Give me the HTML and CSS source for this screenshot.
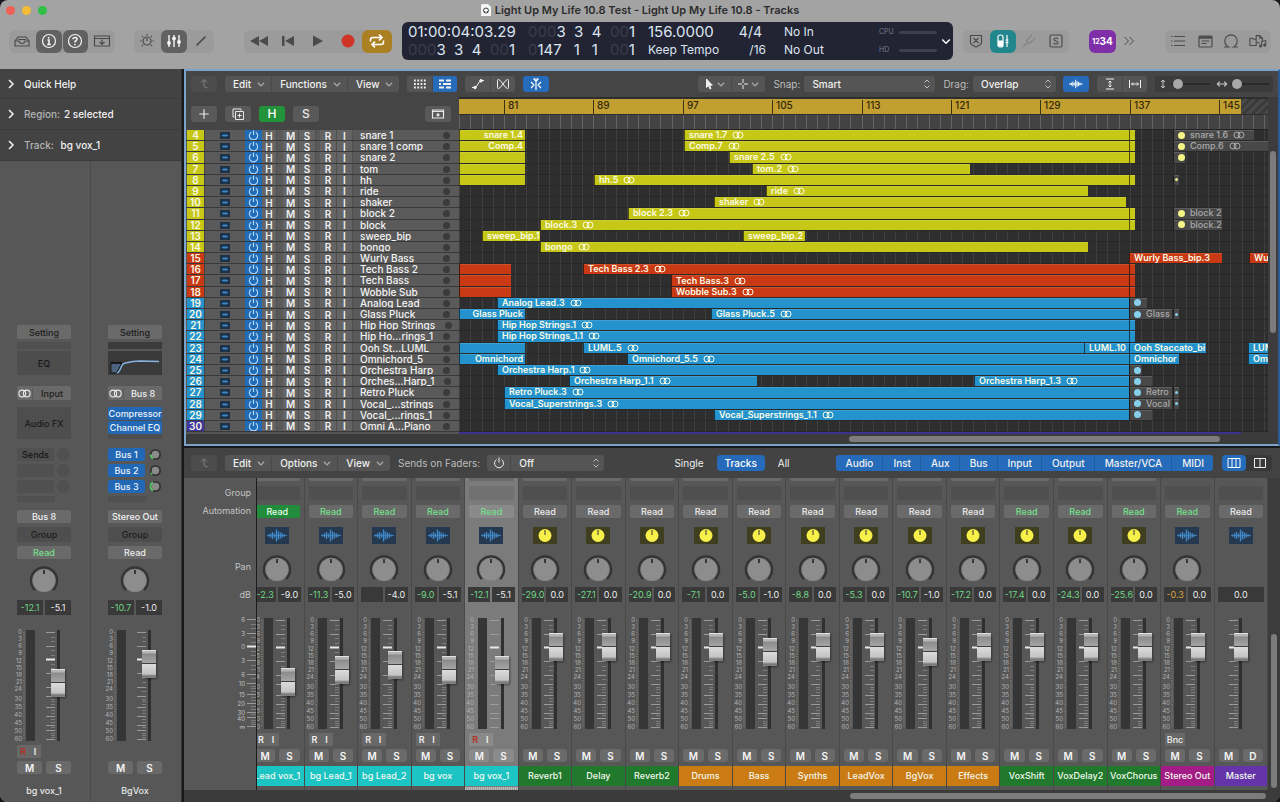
FILE: index.html
```html
<!DOCTYPE html>
<html lang="en">
<head>
    <meta charset="UTF-8">
    <meta name="viewport" content="width=device-width, initial-scale=1.0">
    <title>Light Up My Life 10.8 Test - Light Up My Life 10.8 - Tracks</title>
    <link rel="stylesheet" href="styles.css">
</head>
<body>

<!-- Icon sprite -->
<svg class="sprite" aria-hidden="true">
    <symbol id="i-down" viewBox="0 0 8 8"><path d="M1.500 3l2.500 2.500L6.500 3"/></symbol>
    <symbol id="i-right" viewBox="0 0 8 12"><path d="M2 2l4 4-4 4"/></symbol>
    <symbol id="i-updown" viewBox="0 0 8 12"><path d="M1.500 4.500L4 2l2.500 2.500M1.500 7.500L4 10l2.500-2.500"/></symbol>
    <symbol id="i-back" viewBox="0 0 12 12"><path d="M3 4.500L6 1.500l3 3M6 2v5q0 3 3.500 3"/></symbol>
    <symbol id="i-power" viewBox="0 0 12 12"><path d="M3.500 2.500a4.500 4.500 0 1 0 5 0M6 .5v5"/></symbol>
    <symbol id="i-loop" viewBox="0 0 12 8"><circle cx="4" cy="4" r="3"/><circle cx="8" cy="4" r="3"/></symbol>
    <symbol id="i-wave" viewBox="0 0 20 14"><path d="M0 7h20" stroke-width=".8"/><path d="M1.500 6v2M3.500 5v4M5.500 3.500v7M7.500 5v4M9.500 1v12M11.500 3v8M13.500 4v6M15.500 5v4M17.500 6v2" stroke-width="1.400"/></symbol>
</svg>

<div class="window">
    <header class="titlebar">
        <div class="lights"><i class="red"></i><i class="yellow"></i><i class="green"></i></div>
        <h1>
            <svg width="10" height="12" viewBox="0 0 10 12"><path d="M1 0h6l3 3v9H0V1z" fill="#f4f4f4"/><circle cx="5" cy="6.500" r="2.500" fill="none" stroke="#444"/><path d="M3.500 7v2M6.500 7v2" stroke="#444"/></svg>
            Light Up My Life 10.8 Test - Light Up My Life 10.8 - Tracks
        </h1>
    </header>

    <div class="control-bar">
        <div class="group four">
            <button aria-label="Library"><svg viewBox="0 0 18 16"><path d="M2 8l3-4h8l3 4v5H2zM2 8h4q.5 2.500 3 2.500T12 8h4M5 6.500h8"/></svg></button>
            <button class="on" aria-label="Inspector"><svg viewBox="0 0 18 16"><circle cx="9" cy="8" r="6.500"/><path d="M7.500 7H9v4.500M7.200 11.500h3.600M8.700 4v1.500" stroke-width="1.600"/></svg></button>
            <button class="on" aria-label="Quick Help"><svg viewBox="0 0 18 16"><circle cx="9" cy="8" r="6.500"/><path d="M7 6.300Q7 4.500 9 4.500t2 1.700Q11 7.500 9 8.500v1M9 10.800v1.400" stroke-width="1.500"/></svg></button>
            <button aria-label="Toolbar"><svg viewBox="0 0 18 16"><path d="M1.500 3h15v10h-15zM1.500 5.500h15M9 6.500v4.500M6.500 9L9 11.200 11.500 9"/></svg></button>
        </div>
        <div class="group three">
            <button aria-label="Smart Controls"><svg viewBox="0 0 18 16"><circle cx="9" cy="8" r="4"/><path d="M9 5v3M9 1v1.500M2 8h1.500M14.500 8H16M4 3l1 1M14 3l-1 1M4 13l1-1M14 13l-1-1"/></svg></button>
            <button class="on" aria-label="Mixer"><svg viewBox="0 0 18 16"><path d="M4 2v12M9 2v12M14 2v12" stroke-width="1.400"/><g fill="#fff"><circle cx="4" cy="10" r="1.300"/><circle cx="9" cy="5.500" r="1.300"/><circle cx="14" cy="9" r="1.300"/></g></svg></button>
            <button aria-label="Editors"><svg viewBox="0 0 18 16"><path d="M4.500 12.500l9-9" stroke-width="1.700"/></svg></button>
        </div>
        <div class="group transport">
            <button aria-label="Rewind"><svg viewBox="0 0 20 16"><path class="solid" d="M10 3v10L1 8zM19 3v10l-9-5z"/></svg></button>
            <button aria-label="Go to Beginning"><svg viewBox="0 0 20 16"><path class="solid" d="M4 3h2.500v10H4zM16 3v10L7 8z"/></svg></button>
            <button aria-label="Play"><svg viewBox="0 0 20 16"><path class="solid" d="M5 2.500L15 8 5 13.500z"/></svg></button>
            <button aria-label="Record"><svg viewBox="0 0 20 16"><circle cx="10" cy="8" r="6.500" fill="#cf3527" stroke="none"/></svg></button>
            <button class="cycle" aria-label="Cycle"><svg viewBox="0 0 20 16"><path d="M3.500 8.500V7q0-2.500 2.500-2.500h8.500M12 1.700l3 2.800-3 2.800M16.500 7.500V9q0 2.500-2.500 2.500H5.500M8 8.700l-3 2.800 3 2.800" stroke-width="1.600"/></svg></button>
        </div>

        <section class="lcd" aria-label="Position and tempo">
            <div class="lcd-time">
                <div>01:00:04:03.29</div>
                <div class="beats"><span><s>000</s>3</span><span>3</span><span>4</span><span><s>00</s>1</span></div>
            </div>
            <div class="lcd-time">
                <div class="beats"><span><s>000</s>3</span><span>3</span><span>4</span><span><s>00</s>1</span></div>
                <div class="beats"><span><s>0</s>147</span><span>1</span><span>1</span><span><s>00</s>1</span></div>
            </div>
            <div class="lcd-tempo"><div>156.0000</div><div class="small">Keep Tempo</div></div>
            <div class="lcd-sig"><div class="medium">4/4</div><div class="small">/16</div></div>
            <div class="lcd-io"><div class="small">No In</div><div class="small">No Out</div></div>
            <div class="lcd-load"><div>CPU<i></i></div><div>HD<i></i></div></div>
            <button aria-label="Display mode"><svg viewBox="0 0 8 8"><use href="#i-down"/></svg></button>
        </section>

        <div class="group four">
            <button aria-label="Replace"><svg viewBox="0 0 18 16"><path d="M3.500 2.500h11v7q0 2-5.500 4.500Q3.500 11.500 3.500 9.500zM6.500 5l5 5M11.500 5l-5 5"/></svg></button>
            <button class="teal" aria-label="Low Latency"><svg viewBox="0 0 18 16"><rect x="4" y="2" width="5" height="12" rx="2"/><path d="M4.500 8h4v5h-4z" fill="#fff"/><path d="M13 2v12M11.500 7h3M11.500 9.500h3"/></svg></button>
            <button class="dim" aria-label="Tuner"><svg viewBox="0 0 18 16"><path d="M3 14l4-4M7 10q-1-2 1-4l4-4M7 10q2 1 4-1l4-4"/></svg></button>
            <button aria-label="Solo"><svg viewBox="0 0 18 16"><rect x="3" y="2" width="12" height="12" rx="1.500"/><path d="M11 6Q10.500 5 9 5T7 6.300Q7 7.500 9 8t2 1.700Q11 11 9 11t-2.200-1.200"/></svg></button>
        </div>
        <button class="count-in"><small>12</small>34</button>
        <button class="more" aria-label="More"><svg viewBox="0 0 12 12"><path d="M1.500 2l4 4-4 4M6.500 2l4 4-4 4"/></svg></button>
        <div class="group four last">
            <button aria-label="List Editors"><svg viewBox="0 0 18 16"><path d="M5 3.500h11M5 8h11M5 12.500h11M2 3.500h1.500M2 8h1.500M2 12.500h1.500"/></svg></button>
            <button aria-label="Note Pad"><svg viewBox="0 0 18 16"><rect x="3" y="3" width="13" height="11" rx="1"/><path d="M3 4.500h13" stroke-width="2.500"/><path d="M5.500 8h8M5.500 10.500h5"/></svg></button>
            <button aria-label="Loop Browser"><svg viewBox="0 0 18 16"><path d="M2 14h4.500Q2.800 11.800 2.800 8a6.200 6.200 0 0 1 12.400 0q0 3.800-3.700 6H16"/></svg></button>
            <button aria-label="Browsers"><svg viewBox="0 0 20 16"><path d="M1 5h3l1 1h3v7H1zM8 9V2h4l3 3v3M8 10h4M12 2v3h3M14 13V8.500l4.500-1V12"/><circle cx="13" cy="13.500" r="1.200" class="fill"/><circle cx="17.500" cy="12.500" r="1.200" class="fill"/></svg></button>
        </div>
    </div>

    <main>
        <aside class="inspector">
            <button class="section"><svg viewBox="0 0 8 12"><use href="#i-right"/></svg>Quick Help</button>
            <button class="section"><svg viewBox="0 0 8 12"><use href="#i-right"/></svg><span>Region:</span> 2 selected</button>
            <button class="section"><svg viewBox="0 0 8 12"><use href="#i-right"/></svg><span>Track:</span> &nbsp;bg vox_1</button>
            <div class="channels">
                <div class="channel">
                    <button class="slot">Setting</button>
                    <div class="gain"></div>
                    <div class="eq">EQ</div>
                    <button class="slot io"><svg viewBox="0 0 12 8"><use href="#i-loop"/></svg><span>Input</span></button>
                    <div class="fx empty">Audio FX</div>
                    <div class="sends">
                        <button class="off">Sends</button><i></i>
                        <button class="off" aria-label="Send 2"></button><i></i>
                        <button class="off" aria-label="Send 3"></button><i></i>
                    </div>
                    <div class="send-stub"></div>
                    <button class="slot out">Bus 8</button>
                    <button class="slot grp">Group</button>
                    <div class="lower" data-read="on" data-peak="-12.1" data-level="-5.1" data-pos="53" data-rec="armed" data-name="bg vox_1"></div>
                </div>
                <div class="channel">
                    <button class="slot">Setting</button>
                    <div class="gain dark"></div>
                    <div class="eq curve"><svg viewBox="0 0 55 24"><path d="M3 12h11l-5 10H3z" fill="#4c6480"/><path d="M3 12h11" stroke="#000"/><path d="M9 22q2 0 4-5t5-5q7-2 15-2l19 .5" fill="none" stroke="#86b3df" stroke-width="1.500"/></svg></div>
                    <button class="slot io lit"><svg viewBox="0 0 12 8"><use href="#i-loop"/></svg><span>Bus 8</span></button>
                    <div class="fx">
                        <button>Compressor</button>
                        <button>Channel EQ</button>
                    </div>
                    <div class="sends">
                        <button>Bus 1</button><svg viewBox="0 0 14 14"><circle cx="7.500" cy="7" r="5" class="ring"/><path d="M2.500 7a5 5 0 0 0 2.500 4.500"/><circle cx="7.500" cy="7" r="4" class="cap"/></svg>
                        <button>Bus 2</button><svg viewBox="0 0 14 14"><circle cx="7.500" cy="7" r="5" class="ring"/><path d="M3 9.500l1 1.500"/><circle cx="7.500" cy="7" r="4" class="cap"/></svg>
                        <button>Bus 3</button><svg viewBox="0 0 14 14"><circle cx="7.500" cy="7" r="5" class="ring"/><path d="M5 2.500a5 5 0 0 0 0 9"/><circle cx="7.500" cy="7" r="4" class="cap"/></svg>
                    </div>
                    <div class="send-stub"></div>
                    <button class="slot out">Stereo Out</button>
                    <button class="slot grp">Group</button>
                    <div class="lower" data-peak="-10.7" data-level="-1.0" data-pos="34" data-name="BgVox"></div>
                </div>
            </div>
        </aside>

        <div class="panes">
            <section class="tracks">
                <div class="toolbar">
                    <button class="tool back" aria-label="Up"><svg viewBox="0 0 12 12"><use href="#i-back"/></svg></button>
                    <div class="menus">
                        <button>Edit<svg viewBox="0 0 8 8"><use href="#i-down"/></svg></button>
                        <button>Functions<svg viewBox="0 0 8 8"><use href="#i-down"/></svg></button>
                        <button>View<svg viewBox="0 0 8 8"><use href="#i-down"/></svg></button>
                    </div>
                    <div class="menus icons">
                        <button aria-label="Grid"><svg viewBox="0 0 14 12"><path d="M1 2.500h12M1 6h12M1 9.500h12" stroke-width="1.800" stroke-dasharray="1.800 1.500"/></svg></button>
                        <button class="blue" aria-label="Regions"><svg viewBox="0 0 14 12"><path d="M1 2.500h5M8 2.500h5M1 6h2M5 6h8M1 9.500h5M8 9.500h5" stroke-width="2"/></svg></button>
                    </div>
                    <div class="menus icons">
                        <button aria-label="Automation"><svg viewBox="0 0 14 12"><path d="M1 9.500h2.500q2 0 3.500-3.500t3.500-3.500H13"/><circle cx="4" cy="9.500" r="1.300" class="fill"/><circle cx="10" cy="2.800" r="1.300" class="fill"/></svg></button>
                        <button aria-label="Flex"><svg viewBox="0 0 14 12"><path d="M2.500 1.500q-1 0-1 1v7q0 1 1 1 1.500 0 4.500-4.500t4.500-4.500q1 0 1 1v7q0 1-1 1-1.500 0-4.500-4.500T2.500 1.500z"/></svg></button>
                    </div>
                    <button class="tool blue" aria-label="Catch"><svg viewBox="0 0 14 12"><path d="M5 1h4L7 3.500zM7 2v10M2 4l3 3-3 3M12 4L9 7l3 3" stroke-width="1.200"/></svg></button>
                    <div class="menus tools">
                        <button aria-label="Pointer Tool"><svg viewBox="0 0 12 12"><path class="fill" d="M3.500 1v8.500l2-2 1.500 3.500 1-.5-1.500-3.300h2.800z"/></svg><svg viewBox="0 0 8 8"><use href="#i-down"/></svg></button>
                        <button aria-label="Marquee Tool"><svg viewBox="0 0 12 12"><path d="M6 1v4M6 7v4M1 6h4M7 6h4"/></svg><svg viewBox="0 0 8 8"><use href="#i-down"/></svg></button>
                    </div>
                    <label for="snap">Snap:</label>
                    <div class="select snap"><select id="snap"><option>Smart</option></select><svg viewBox="0 0 8 12"><use href="#i-updown"/></svg></div>
                    <label for="drag">Drag:</label>
                    <div class="select drag"><select id="drag"><option>Overlap</option></select><svg viewBox="0 0 8 12"><use href="#i-updown"/></svg></div>
                    <button class="tool blue" aria-label="Waveform Zoom"><svg viewBox="0 0 20 14"><use href="#i-wave"/></svg></button>
                    <div class="menus icons">
                        <button aria-label="Zoom Vertical"><svg viewBox="0 0 14 12"><path d="M3 1h8M3 11h8M7 3v6M5.500 4.500L7 3l1.500 1.500M5.500 7.500L7 9l1.500-1.500"/></svg></button>
                        <button aria-label="Zoom Horizontal"><svg viewBox="0 0 14 12"><path d="M1.500 2v8M12.500 2v8M3.500 6h7M5 4.500L3.500 6 5 7.500M9 4.500L10.500 6 9 7.500"/></svg></button>
                    </div>
                    <div class="zooms">
                        <svg viewBox="0 0 8 12"><path d="M4 2v8M2 4l2-2 2 2M2 8l2 2 2-2"/></svg><input type="range" value="8" aria-label="Vertical zoom">
                        <svg viewBox="0 0 14 10"><path d="M3 5h8M5 3L3 5l2 2M9 3l2 2-2 2"/></svg><input type="range" value="8" aria-label="Horizontal zoom">
                    </div>
                </div>

                <div class="arrange">
                    <div class="headers">
                        <div class="headers-bar">
                            <button aria-label="Add track"><svg viewBox="0 0 12 12"><path d="M6 2v8M2 6h8"/></svg></button>
                            <button aria-label="Duplicate track"><svg viewBox="0 0 14 14"><path d="M3.500 10H2V2h8v1.500M4.500 4.500h8v8h-8zM8.500 6.500v4M6.500 8.500h4"/></svg></button>
                            <button class="hide">H</button>
                            <button>S</button>
                            <button class="config" aria-label="Header settings"><svg viewBox="0 0 14 12"><path d="M1.500 2h11v8h-11zM1.500 3.500h11M7 5v3M5.500 6.500L7 8l1.500-1.500" stroke-width="1.200"/></svg></button>
                        </div>
                        <div class="track-list" id="track-list"></div>
                        <div class="sliver"></div>
                    </div>
                    <div class="timeline">
                        <div class="ruler" id="ruler"></div>
                        <div class="ticks" id="ticks"></div>
                        <div class="lanes" id="lanes"></div>
                        <div class="sliver"><i></i></div>
                    </div>
                    <div class="vscroll"><i></i></div>
                </div>
                <div class="hscroll"><i></i></div>
            </section>

            <section class="mixer">
                <div class="toolbar">
                    <button class="tool back" aria-label="Up"><svg viewBox="0 0 12 12"><use href="#i-back"/></svg></button>
                    <div class="menus">
                        <button>Edit<svg viewBox="0 0 8 8"><use href="#i-down"/></svg></button>
                        <button>Options<svg viewBox="0 0 8 8"><use href="#i-down"/></svg></button>
                        <button>View<svg viewBox="0 0 8 8"><use href="#i-down"/></svg></button>
                    </div>
                    <label for="sends">Sends on Faders:</label>
                    <div class="select sends-on"><button aria-label="Sends on faders"><svg viewBox="0 0 12 12"><use href="#i-power"/></svg></button><select id="sends"><option>Off</option></select><svg viewBox="0 0 8 12"><use href="#i-updown"/></svg></div>
                    <div class="views">
                        <button>Single</button>
                        <button class="blue">Tracks</button>
                        <button>All</button>
                    </div>
                    <div class="filters">
                        <button>Audio</button><button>Inst</button><button>Aux</button><button>Bus</button><button>Input</button><button>Output</button><button>Master/VCA</button><button>MIDI</button>
                    </div>
                    <div class="widths">
                        <button class="blue" aria-label="Narrow strips"><svg viewBox="0 0 14 12"><path d="M1 1.500h12v9H1zM5 1.500v9M9 1.500v9"/></svg></button>
                        <button aria-label="Wide strips"><svg viewBox="0 0 14 12"><path d="M1.500 1.500h11v9h-11zM7 1.500v9"/></svg></button>
                    </div>
                </div>
                <div class="mixer-body">
                    <div class="labels">
                        <span class="l-group">Group</span>
                        <span class="l-auto">Automation</span>
                        <span class="l-pan">Pan</span>
                        <span class="l-db">dB</span>
                        <div id="main-scale"></div>
                    </div>
                    <div class="strips"><div class="strips-row" id="strips"></div></div>
                    <div class="vscroll"><i></i></div>
                </div>
                <div class="hscroll"><i></i></div>
            </section>
        </div>
    </main>
</div>

<script src="app.js"></script>
</body>
</html>
```
FILE: styles.css
```css
* {
    box-sizing: border-box;
}
html {
    background: #15161a;
}
body {
    margin: 0;
    font-family: 'Inter', 'Liberation Sans', sans-serif;
    font-size: 11px;
    color: #e8e8e8;
}
button, select, input {
    font: inherit;
    color: inherit;
    margin: 0;
    padding: 0;
    border: 0;
    background: none;
}
button {
    display: flex;
    align-items: center;
    justify-content: center;
    white-space: nowrap;
}
svg {
    fill: none;
    stroke: currentColor;
    display: block;
    flex: none;
}
i {
    display: block;
}
.sprite {
    position: absolute;
    width: 0;
    height: 0;
}
.fill {
    fill: currentColor;
}
.window {
    height: 100vh;
    min-height: 802px;
    display: flex;
    flex-direction: column;
    border-radius: 8px;
    overflow: hidden;
    background: #a3a3a3;
}

/* Title bar */
.titlebar {
    display: grid;
    grid-template-columns: 1fr auto 1fr;
    align-items: center;
    height: 20px;
    padding: 0 6px;
}
.titlebar h1 {
    margin: 0;
    display: flex;
    align-items: center;
    gap: 4px;
    font-size: 11px;
    font-weight: 600;
    color: #2c2c2c;
}
.titlebar h1 svg {
    stroke: none;
}
.lights {
    display: flex;
    gap: 7px;
}
.lights i {
    width: 9px;
    height: 9px;
    border-radius: 50%;
}
.lights .red { background: #ee6156; }
.lights .yellow { background: #f2bd35; }
.lights .green { background: #2fc146; }

/* Control bar */
.control-bar {
    display: flex;
    align-items: center;
    height: 49px;
    padding: 0 9px 7px;
    color: #4b4b4b;
}
.group {
    display: flex;
    height: 23px;
    border-radius: 6px;
    background: #9b9b9b;
}
.group button {
    flex: 1;
    border-radius: 6px;
}
.group svg {
    width: 18px;
    height: 16px;
    stroke-width: 1.200;
}
.group.four { width: 106px; gap: 1px; }
.group.three { width: 80px; margin: 0 30px 0 19px; }
.group.transport { width: 148px; margin-right: 10px; }
.group.transport svg { width: 20px; }
.solid {
    fill: currentColor;
    stroke: none;
}
.group .on {
    background: #616161;
    color: #f5f5f5;
}
.group .cycle {
    background: #ab8023;
    color: #fff;
}
.group .teal {
    background: #22868d;
    color: #fff;
}
.group .dim {
    color: #848484;
}
.count-in {
    width: 27px;
    height: 23px;
    margin: 0 7px 0 20px;
    border-radius: 6px;
    background: #7f2fa8;
    color: #fff;
    font-weight: 700;
    font-size: 10px;
}
.count-in small {
    font-size: 7px;
}
.more {
    margin-right: 30px;
}
.more svg {
    width: 12px;
    height: 12px;
}
.lcd {
    flex: 1;
    height: 38px;
    margin-right: 10px;
    display: flex;
    border-radius: 6px;
    background: #232433;
    color: #dce4f2;
    font-size: 15px;
    line-height: 18px;
    padding: 1px 2px 1px 6px;
}
.lcd s {
    text-decoration: none;
    color: #3a3c4b;
}
.lcd-time {
    width: 107px;
    margin-right: 13px;
}
.beats {
    display: flex;
    justify-content: space-between;
}
.lcd-tempo {
    width: 84px;
}
.lcd .small {
    font-size: 12px;
}
.lcd .medium {
    font-size: 14px;
    padding-right: 4px;
}
.lcd-sig {
    width: 34px;
    text-align: right;
    margin-right: 18px;
}
.lcd-io {
    flex: 1;
}
.lcd-load {
    width: 58px;
    margin-right: 4px;
    color: #747b8c;
    font-size: 7px;
}
.lcd-load div {
    display: flex;
    align-items: center;
    justify-content: space-between;
}
.lcd-load i {
    width: 38px;
    height: 3px;
    border-radius: 2px;
    background: #3d3f4e;
}
.lcd button {
    width: 10px;
    color: #fff;
}
.lcd button svg {
    width: 12px;
    height: 12px;
}

main {
    flex: 1;
    display: flex;
    min-height: 0;
}

/* Inspector */
.inspector {
    width: 182px;
    display: flex;
    flex-direction: column;
    background: #575757;
    border-right: 1px solid #333;
}
.section {
    justify-content: flex-start;
    height: 31px;
    padding-left: 7px;
    background: #434343;
    border-bottom: 1px solid #3a3a3a;
    color: #f2f2f2;
    font-size: 10px;
    font-weight: 500;
}
.section:first-child {
    height: 30px;
}
.section svg {
    width: 8px;
    height: 12px;
    margin-right: 9px;
    stroke-width: 1.500;
}
.section span {
    color: #b4b4b4;
    margin-right: 4px;
}
.channels {
    flex: 1;
    display: flex;
}
.channel {
    flex: 1;
    display: flex;
    flex-direction: column;
    justify-content: flex-end;
    padding: 0 19px 4px 17px;
    font-size: 9px;
}
.channel + .channel {
    border-left: 1px solid #4a4a4a;
}
.slot {
    height: 14px;
    border-radius: 2px;
    background: #6a6a6a;
    color: #1d1d1d;
    font-weight: 500;
}
.gain {
    height: 7px;
    margin: 3px 0 2px;
    background: #505050;
}
.gain.dark {
    background: #3b3b3b;
}
.eq {
    height: 24px;
    display: grid;
    place-items: center;
    background: #4d4d4d;
    color: #161616;
    font-weight: 500;
}
.eq.curve {
    background: #3a3a3a;
}
.eq svg {
    width: 100%;
    height: 24px;
}
.slot.io {
    margin: 11px 0 7px;
}
.slot.io svg {
    width: 15px;
    height: 9px;
    color: #e8e8e8;
}
.slot.io span {
    flex: 1;
    border-left: 1px solid #595959;
}
.slot.lit, .slot.out {
    color: #f0f0f0;
}
.fx {
    height: 32px;
    background: #4e4e4e;
}
.fx.empty {
    display: grid;
    place-items: center;
    color: #191919;
    font-weight: 500;
}
.fx button, .sends button {
    width: 100%;
    height: 13px;
    border-radius: 2px;
    background: #2368b4;
    color: #eaf2fb;
    font-weight: 500;
}
.fx button + button {
    margin-top: 1px;
}
.sends {
    display: grid;
    grid-template-columns: 1fr 14px;
    gap: 3px 3px;
    margin-top: 9px;
}
.sends .off {
    background: #505050;
    color: #151515;
}
.sends i {
    width: 13px;
    border-radius: 50%;
    background: #505050;
}
.sends svg {
    width: 14px;
    height: 13px;
    stroke: #55c468;
    stroke-width: 2;
}
.sends .ring { stroke: #333; }
.sends .cap { fill: #8a8a8a; stroke: none; }
.send-stub {
    height: 6px;
    width: 38px;
    margin: 3px 0 8px;
    background: #505050;
}
.slot.out {
    height: 13px;
}
.slot.grp {
    height: 15px;
    margin: 4px 0;
    background: #4e4e4e;
}

/* Lower half of a channel, shared by the inspector and the mixer */
.lower {
    display: flex;
    flex-direction: column;
}
.read {
    height: 13px;
    border-radius: 2px;
    background: #6a6a6a;
    color: #ececec;
    font-size: 9px;
    font-weight: 500;
}
.read.lit {
    color: #74e08a;
}
.read.touch {
    background: #218c3b;
    color: #e8ffe8;
}
.knob {
    width: 30px;
    height: 29px;
    margin: 6px auto 6px;
}
.db {
    display: flex;
    gap: 2px;
    height: 15px;
}
.db span {
    flex: 1;
    display: grid;
    place-items: center;
    background: #393939;
    color: #ececec;
    font-size: 9px;
}
.db .peak { color: #6ed784; }
.db .warn { color: #d9a23a; }
.fader-row {
    display: flex;
    height: 111px;
    margin-top: 15px;
    margin-left: -3px;
}
.meter {
    width: 9px;
    background: #363636;
    margin-right: 11px;
}
.fader-ticks {
    margin-right: -5px;
}
.db-scale {
    overflow: visible;
}
.db-scale text {
    fill: #b2b2b2;
    stroke: none;
    font-size: 6px;
    text-anchor: end;
}
.fader {
    appearance: none;
    writing-mode: vertical-lr;
    direction: rtl;
    width: 14px;
    height: 111px;
    background: linear-gradient(#303030, #303030) center / 3px 100% no-repeat;
}
.fader::-webkit-slider-thumb {
    appearance: none;
    width: 14px;
    height: 28px;
    background: linear-gradient(#e2e2e2 0 1px, #b5b5b5 1px 3px, #8b8b8b 4px, #a5a5a5 13px, #404040 13px 14px, #dcdcdc 14px, #c3c3c3 24px, #787878 26px, #828282);
    box-shadow: 1px 1px 2px rgba(0, 0, 0, 0.4);
}
.ri {
    display: flex;
    height: 13px;
    margin-top: 4px;
}
.ri button {
    width: 12px;
    background: #686868;
    color: #f0f0f0;
    font-size: 9px;
    font-weight: 600;
}
.ri button.bnc {
    width: 20px;
    font-weight: 500;
}
.ri .armed { color: #b33025; }
.ms {
    display: flex;
    gap: 4px;
    height: 13px;
    margin-top: 3px;
}
.ms button {
    flex: 1;
    border-radius: 3px;
    background: #6a6a6a;
    color: #f5f5f5;
    font-size: 10px;
    font-weight: 600;
}
.name {
    text-align: center;
    white-space: nowrap;
}
.channel .name {
    height: 14px;
    margin-top: 10px;
    line-height: 14px;
    font-size: 9px;
    font-weight: 500;
}

/* Panes */
.panes {
    flex: 1;
    min-width: 0;
    display: flex;
    flex-direction: column;
    background: #17191d;
    padding-left: 2px;
}
.tracks {
    height: 377px;
    display: flex;
    flex-direction: column;
    background: #454545;
    border: 2px solid #7ba3c9;
    border-right: 2px solid #2b5d94;
}
.toolbar {
    display: flex;
    align-items: center;
    height: 26px;
    flex: none;
    padding: 0 5px 1px;
    color: #f0f0f0;
    font-size: 10px;
    font-weight: 500;
}
.toolbar svg {
    width: 14px;
    height: 12px;
}
.toolbar label {
    color: #bcbcbc;
    font-weight: 400;
}
.tool {
    width: 26px;
    height: 16px;
    margin-right: 8px;
    border-radius: 3px;
    background: #515151;
}
.toolbar .back {
    color: #808080;
    background: #4c4c4c;
}
.toolbar .blue {
    background: #256bba;
    color: #fff;
}
.menus {
    display: flex;
    height: 16px;
    margin-right: 8px;
    border-radius: 3px;
    background: #555;
    overflow: hidden;
}
.menus button {
    padding: 0 5px 0 8px;
    gap: 5px;
}
.menus button + button {
    border-left: 1px solid #494949;
}
.menus button svg:last-child {
    width: 10px;
    height: 10px;
    color: #a9a9a9;
}
.menus.icons button {
    width: 25px;
    padding: 0;
}
.menus.icons button svg:last-child {
    width: 14px;
    height: 12px;
    color: #f0f0f0;
}
.menus.tools {
    margin-left: auto;
}
.menus.tools button {
    gap: 0;
    padding: 0 5px 0 4px;
}
.select {
    display: flex;
    align-items: center;
    height: 16px;
    border-radius: 3px;
    background: #555;
    padding-right: 4px;
}
.select select {
    appearance: none;
    flex: 1;
    padding-left: 8px;
    outline: none;
}
.toolbar .select svg {
    width: 8px;
    color: #bdbdbd;
}
.select.snap { width: 131px; margin: 0 8px 0 4px; }
.select.drag { width: 83px; margin: 0 7px 0 4px; }
.select.sends-on {
    width: 117px;
    margin-left: 7px;
}
.select.sends-on button {
    width: 24px;
    height: 16px;
    border-right: 1px solid #494949;
}
.toolbar .select button svg {
    width: 12px;
    color: #f0f0f0;
}
.zooms {
    display: flex;
    align-items: center;
    height: 16px;
    width: 118px;
    border-radius: 3px;
    background: #3b3b3b;
    color: #c8c8c8;
}
.zooms svg {
    width: 16px;
}
.zooms input {
    appearance: none;
    flex: 1;
    min-width: 0;
    height: 10px;
    margin-right: 4px;
    background: linear-gradient(#2a2a2a, #2a2a2a) center / 100% 2px no-repeat;
}
.zooms input::-webkit-slider-thumb {
    appearance: none;
    width: 10px;
    height: 10px;
    border-radius: 50%;
    background: #a8a8a8;
}
.arrange {
    flex: 1;
    min-height: 0;
    display: flex;
}
.headers {
    width: 273px;
    display: flex;
    flex-direction: column;
}
.headers-bar {
    display: flex;
    align-items: center;
    gap: 8px;
    height: 33px;
    padding: 0 8px 0 5px;
}
.headers-bar button {
    width: 26px;
    height: 16px;
    border-radius: 3px;
    background: #595959;
    font-weight: 500;
    font-size: 12px;
}
.headers-bar svg {
    width: 14px;
    height: 14px;
}
.headers-bar .hide { background: #23933b; color: #fff; }
.headers-bar .config { margin-left: auto; }
.track-list, .lanes {
    flex: 1;
    min-height: 0;
    display: flex;
    flex-direction: column;
}
.track {
    flex: 1;
    min-height: 0;
    display: grid;
    grid-template-columns: 18px 40px 17px 15px 6px 16px 17px 4px 17px 16px 1fr 26px;
    align-items: stretch;
    background: #5a5a5a;
    border-bottom: 1px solid #393939;
    overflow: hidden;
    padding-left: 1px;
    font-size: 10px;
    line-height: 10px;
}
.track button {
    background: #646464;
    border-right: 1px solid #505050;
    color: #f0f0f0;
    font-weight: 600;
}
.track button.power {
    background: #216cb8;
    border: 0;
}
.track .power svg {
    width: 11px;
    height: 11px;
    stroke: #b9dcff;
    stroke-width: 1.200;
}
.track .num {
    text-align: center;
    font-weight: 600;
    color: #f7f7e4;
    border-right: 1px solid #444;
}
.track .kind {
    place-self: center;
    width: 10px;
    height: 7px;
    background: #1f3348;
    color: #3e86cb;
}
.track .title {
    padding-left: 7px;
    white-space: nowrap;
    color: #f2f2f2;
    font-weight: 500;
}
.track .dot {
    place-self: center;
    width: 7px;
    height: 7px;
    border-radius: 50%;
    background: #3a3a3a;
}
.yellow { background: #c7c718; }
.red { background: #c83914; }
.cyan { background: #2493cd; }
.purple { background: #3f35a0; }
.sliver {
    height: 12px;
    flex: none;
    background: #3b3b3b;
    border-top: 2px solid #555;
}
.timeline {
    flex: 1;
    min-width: 0;
    display: flex;
    flex-direction: column;
    background: #2e2e2e;
}
.timeline .sliver {
    border: 0;
}
.timeline .sliver i {
    height: 2px;
    margin-right: 27px;
    background: #3b3292;
}
.ruler {
    position: relative;
    height: 15px;
    margin: 2px 0 1px;
    background: linear-gradient(#c29f31, #c29f31) 0 / calc(100% - 27px) 100% no-repeat,
        repeating-linear-gradient(135deg, #3a3a3a 0 3px, #484848 3px 6px);
}
.ruler span {
    position: absolute;
    top: 1px;
    height: 14px;
    border-left: 1px solid #3b3210;
    padding-left: 3px;
    line-height: 11px;
    font-size: 10px;
    color: #33290a;
    font-weight: 500;
}
.ticks {
    height: 15px;
    overflow: hidden;
    background: #434343;
    border-bottom: 1px solid #222;
}
.ticks svg, .grid-lines {
    width: 100%;
    height: 100%;
}
.ticks svg { stroke: #656565; }
.lanes {
    position: relative;
    overflow: hidden;
}
.grid-lines {
    position: absolute;
    inset: 0;
    stroke: #404040;
}
.lane {
    flex: 1;
    min-height: 0;
    position: relative;
    border-bottom: 1px solid #292929;
}
.region {
    position: absolute;
    top: 0;
    bottom: 0;
    display: flex;
    align-items: center;
    gap: 5px;
    padding-left: 4px;
    overflow: hidden;
    white-space: nowrap;
    border-left: 1px solid rgba(0, 0, 0, 0.6);
    box-shadow: inset 0 1px rgba(255, 255, 255, 0.12);
    color: #fbfbe6;
    font-size: 9px;
    font-weight: 600;
    line-height: 10px;
}
.region.end {
    justify-content: flex-end;
    padding-right: 2px;
}
.region svg {
    width: 12px;
    height: 8px;
}
.region.muted {
    background: #484848;
    color: #aaa;
    font-weight: 500;
}
.region b {
    width: 7px;
    height: 7px;
    border-radius: 50%;
    flex: none;
}
.region.yellow-dot b { background: #f5f58a; }
.region.cyan-dot b { background: #86cfea; }
.region.tiny {
    padding-left: 1px;
}
.region.tiny b {
    width: 3px;
    height: 3px;
}
.vscroll {
    width: 10px;
    background: #3c3c3c;
}
.vscroll i {
    width: 6px;
    margin: 0 2px;
    border-radius: 3px;
    background: #7c7c7c;
}
.tracks .vscroll i {
    height: 182px;
    margin-top: 54px;
}
.hscroll {
    height: 9px;
    flex: none;
    background: #3b3b3b;
}
.hscroll i {
    height: 6px;
    border-radius: 3px;
    background: #7c7c7c;
}
.tracks .hscroll {
    margin-top: -9px;
    z-index: 1;
}
.tracks .hscroll i {
    margin: 1px 58px 0 auto;
    width: 34%;
}

/* Mixer */
.mixer {
    flex: 1;
    min-height: 0;
    display: flex;
    flex-direction: column;
    margin-top: 2px;
    background: #434343;
}
.mixer .toolbar {
    height: 30px;
    padding: 0 8px 0 7px;
}
.views {
    display: flex;
    gap: 5px;
    margin: 0 38px 0 auto;
}
.views button {
    height: 16px;
    padding: 0 8px;
    border-radius: 4px;
    font-weight: 400;
}
.views .blue {
    font-weight: 500;
}
.filters {
    display: flex;
    height: 16px;
    margin-right: 9px;
    border-radius: 3px;
    background: #256bba;
}
.filters button {
    padding: 0 9px 0 10px;
}
.filters button + button {
    border-left: 1px solid #1f5ca2;
}
.widths {
    display: flex;
    gap: 2px;
    border-radius: 4px;
    background: #383838;
}
.widths button {
    width: 24px;
    height: 16px;
    border-radius: 4px;
}
.mixer-body {
    flex: 1;
    display: flex;
    min-height: 0;
}
.labels {
    width: 73px;
    display: flex;
    flex-direction: column;
    background: #575757;
    border-right: 1px solid #1c1c1c;
    color: #c4c4c4;
    font-size: 9px;
    line-height: 14px;
    text-align: right;
}
.labels span {
    padding-right: 5px;
}
.l-group { margin-top: 8px; }
.l-auto { margin-top: 4px; }
.l-pan { margin-top: 42px; }
.l-db { margin-top: 14px; }
#main-scale {
    margin: 15px 0 0 auto;
}
#main-scale svg {
    overflow: visible;
}
#main-scale text {
    fill: #c0c0c0;
    stroke: none;
    font-size: 6px;
    text-anchor: end;
}
.strips {
    flex: 1;
    min-width: 0;
    overflow: hidden;
    background: #575757;
}
.strips-row {
    display: flex;
    height: 100%;
    margin-left: -6px;
}
.strip {
    flex: 1;
    min-width: 0;
    display: flex;
    flex-direction: column;
    border-right: 1px solid #494949;
    padding: 0 4px;
}
.strip.selected {
    background: #7b7b7b;
}
.strip.selected .read, .strip.selected .ms button, .strip.selected .ri button {
    background: #8a8a8a;
}
.stub {
    height: 3px;
    border-radius: 0 0 2px 2px;
    background: #6a6a6a;
}
.stub.none {
    visibility: hidden;
}
.slot-group {
    height: 14px;
    margin: 5px 0;
    background: #4f4f4f;
}
.strip.selected .slot-group {
    background: #717171;
}
.type {
    width: 24px;
    height: 17px;
    margin: 9px auto 4px;
    background: #24384f;
    color: #4188c8;
}
.type.aux {
    background: #3f3f20;
    color: #333;
}
.type svg {
    width: 20px;
    height: 17px;
    margin: 0 2px;
}
.strip .knob {
    margin-bottom: 4px;
}
.strip .read {
    flex: none;
}
.strip .db {
    margin: 0 -1px;
}
.strip .fader-row {
    margin-top: 16px;
}
.strip .meter {
    margin-right: 3px;
}
.strip .name {
    height: 20px;
    margin: 4px -4px 0;
    line-height: 19px;
    font-size: 9px;
    font-weight: 500;
    color: #f3f8ee;
    display: flex;
    justify-content: center;
}
.teal-name { background: #1dc4c4; }
.green-name { background: #20792c; }
.orange-name { background: #cb7b14; }
.pink-name { background: #a41c85; }
.purple-name { background: #6534ab; }
.strip.selected::after {
    content: '';
    flex: 1;
    margin: 1px -4px 0;
    background: repeating-linear-gradient(90deg, #bcbcbc 0 1px, #999 1px 2px);
}
.mixer .vscroll {
    width: 12px;
    padding-top: 156px;
}
.mixer .vscroll i {
    height: 154px;
    margin: 0 3px;
}
.mixer .hscroll {
    height: 12px;
}
.mixer .hscroll i {
    width: 38%;
    margin: 3px 14px 0 auto;
}
```
FILE: app.js
```js
const use = (id, box) => `<svg viewBox="0 0 ${box}"><use href="#${id}"/></svg>`;

// Regions: [left, width, label, flags]. Flags: l = loop badge, e = label at the end,
// m = muted, t = tiny muted
const tracks = [
    [4, 'snare 1', 'yellow', [[0, 66, 'snare 1.4', 'e'], [225, 445, 'snare 1.7', 'l'], [670, 6], [714, 81, 'snare 1.6', 'ml']]],
    [5, 'snare 1 comp', 'yellow', [[0, 66, 'Comp.4', 'e'], [225, 445, 'Comp.7', 'l'], [670, 6], [714, 96, 'Comp.6', 'ml']]],
    [6, 'snare 2', 'yellow', [[0, 66], [270, 400, 'snare 2.5', 'l'], [670, 6], [714, 12, '', 'm']]],
    [7, 'tom', 'yellow', [[0, 66], [293, 218, 'tom.2', 'l']]],
    [8, 'hh', 'yellow', [[0, 66], [135, 535, 'hh.5', 'l'], [670, 6], [714, 6, '', 'mt']]],
    [9, 'ride', 'yellow', [[307, 322, 'ride', 'l']]],
    [10, 'shaker', 'yellow', [[255, 412, 'shaker', 'l']]],
    [11, 'block 2', 'yellow', [[169, 501, 'block 2.3', 'l'], [670, 6], [714, 49, 'block 2', 'm']]],
    [12, 'block', 'yellow', [[81, 589, 'block.3', 'l'], [670, 6], [714, 49, 'block.2', 'm']]],
    [13, 'sweep_bip', 'yellow', [[23, 58, 'sweep_bip.1'], [284, 62, 'sweep_bip.2']]],
    [14, 'bongo', 'yellow', [[81, 548, 'bongo', 'l']]],
    [15, 'Wurly Bass', 'red', [[670, 93, 'Wurly Bass_bip.3'], [790, 40, 'Wurly']]],
    [16, 'Tech Bass 2', 'red', [[0, 52], [124, 546, 'Tech Bass 2.3', 'l'], [670, 6]]],
    [17, 'Tech Bass', 'red', [[0, 52], [212, 458, 'Tech Bass.3', 'l'], [670, 6]]],
    [18, 'Wobble Sub', 'red', [[0, 52], [212, 458, 'Wobble Sub.3', 'l'], [670, 6]]],
    [19, 'Analog Lead', 'cyan', [[38, 632, 'Analog Lead.3', 'l'], [670, 18, '', 'm']]],
    [20, 'Glass Pluck', 'cyan', [[0, 66, 'Glass Pluck', 'e'], [252, 418, 'Glass Pluck.5', 'l'], [670, 43, 'Glass', 'm'], [714, 6, '', 'mt']]],
    [21, 'Hip Hop Strings', 'cyan', [[38, 632, 'Hip Hop Strings.1', 'l'], [670, 6]]],
    [22, 'Hip Ho...rings_1', 'cyan', [[38, 632, 'Hip Hop Strings_1.1', 'l'], [670, 6]]],
    [23, 'Ooh St...LUML', 'cyan', [[0, 66], [124, 501, 'LUML.5', 'l'], [625, 45, 'LUML.10'], [670, 77, 'Ooh Staccato_bi'], [789, 40, 'LUML']]],
    [24, 'Omnichord_5', 'cyan', [[0, 66, 'Omnichord', 'e'], [168, 502, 'Omnichord_5.5', 'l'], [670, 50, 'Omnichor'], [789, 40, 'Omni']]],
    [25, 'Orchestra Harp', 'cyan', [[38, 632, 'Orchestra Harp.1', 'l'], [670, 12, '', 'm']]],
    [26, 'Orches...Harp_1', 'cyan', [[110, 188, 'Orchestra Harp_1.1', 'l'], [515, 155, 'Orchestra Harp_1.3', 'l'], [670, 23, '', 'm']]],
    [27, 'Retro Pluck', 'cyan', [[45, 625, 'Retro Pluck.3', 'l'], [670, 43, 'Retro', 'm'], [714, 6, '', 'mt']]],
    [28, 'Vocal_...strings', 'cyan', [[45, 625, 'Vocal_Superstrings.3', 'l'], [670, 43, 'Vocal', 'm'], [714, 6, '', 'mt']]],
    [29, 'Vocal_...rings_1', 'cyan', [[255, 415, 'Vocal_Superstrings_1.1', 'l'], [670, 23, '', 'm']]],
    [30, 'Omni A...Piano', 'purple', []]
];

document.getElementById('track-list').innerHTML = tracks.map(([num, title, color]) => `
    <div class="track">
        <span class="num ${color}">${num}</span>
        <svg class="kind" viewBox="0 0 10 7"><path d="M2 3.500h6M4 2v3M6 2v3"/></svg>
        <button class="power" aria-label="Power">${use('i-power', '12 12')}</button>
        <button>H</button><span></span>
        <button>M</button><button>S</button><span></span>
        <button>R</button><button>I</button>
        <span class="title">${title}</span>
        <i class="dot"></i>
    </div>`).join('');

function region([left, width, label = '', flags = ''], color) {
    const muted = flags.includes('m');
    let cls = muted ? `muted ${color}-dot` : color;
    if (flags.includes('e')) cls += ' end';
    if (flags.includes('t')) cls += ' tiny';
    return `<div class="region ${cls}" style="left:${left}px;width:${width}px">` +
        `${muted ? '<b></b>' : ''}${label}${flags.includes('l') ? use('i-loop', '12 8') : ''}</div>`;
}

// Bar lines: eight bars take about 89px
const barX = bar => Math.round(45 + (bar - 81) * 89.4 / 8);
let lines = '';
for (let bar = 77; bar < 160; bar++) {
    lines += `M${barX(bar)}.500 0v400`;
}

document.getElementById('ticks').innerHTML = `<svg><path d="${lines}"/></svg>`;
document.getElementById('lanes').innerHTML = `<svg class="grid-lines"><path d="${lines}"/></svg>` +
    tracks.map(t => `<div class="lane">${t[3].map(r => region(r, t[2])).join('')}</div>`).join('');

document.getElementById('ruler').innerHTML = [81, 89, 97, 105, 113, 121, 129, 137, 145]
    .map(bar => `<span style="left:${barX(bar)}px">${bar}</span>`).join('');

// Channel strips
const dbMarks = [[0, 2], [3, 9], [6, 16], [9, 23], [12, 31], [15, 38], [18, 45], [21, 52], [24, 59], [30, 69], [35, 77], [40, 85], [45, 93], [50, 101], [60, 109]];
const majors = [2, 16, 43, 57, 66, 77, 86, 95, 100, 109];
const minors = [7, 11, 20, 25, 34, 38, 48, 52, 61, 69, 71, 74, 80, 83, 89, 92, 97, 103, 105, 107];

function dbScale() {
    return `<svg class="db-scale" width="12" height="111">${dbMarks.map(([n, y]) =>
        `<text x="8" y="${y + 2}">${n}</text>`).join('')}
        <path d="M10 2v108" stroke="#8c8c8c" stroke-dasharray="1 1.400"/></svg>`;
}

function tickPaths(x1, x2, right) {
    return `<path d="${majors.map(y => `M${x1} ${y}.500H${right}`).join('')}" stroke="#9a9a9a"/>
        <path d="${minors.map(y => `M${x2} ${y}.500H${right}`).join('')}" stroke="#7d7d7d"/>
        <path d="M${x1} 29.500H${right}" stroke="#e8e8e8" stroke-width="2"/>`;
}

const knob = `<svg class="knob" viewBox="0 0 30 29" role="img" aria-label="Pan">
    <path d="M6 25a13 13 0 1 1 18 0" stroke="#343434" stroke-width="2.500"/>
    <circle cx="15" cy="15.500" r="11.500" fill="#8d8d8d" stroke="#777" stroke-width=".5"/>
    <path d="M15 5v4" stroke="#1e1e1e" stroke-width="1.500"/></svg>`;

// pos is the distance from the top of the fader to the middle of its cap
function lower(s) {
    const value = Math.round((1 - (s.pos - 14) / 83) * 100);
    let ri = '';
    if (s.rec) ri = `<button class="${s.rec}">R</button><button>I</button>`;
    if (s.bounce) ri = '<button class="bnc">Bnc</button>';
    return `
        <button class="read ${s.read === 'on' ? 'lit' : s.read || ''}">Read</button>
        ${s.icon || ''}
        ${s.master ? '<div class="knob"></div>' : knob}
        <div class="db">${s.master ? '' : `<span class="peak ${s.warn || ''}">${s.peak}</span>`}<span>${s.level}</span></div>
        <div class="fader-row">
            ${s.master ? '<svg width="13" height="111"></svg>' : `${dbScale()}<div class="meter"></div>`}
            <svg class="fader-ticks" width="10" height="111">${tickPaths(0, 5, 9)}</svg>
            <input class="fader" type="range" value="${value}" aria-label="${s.name} volume">
        </div>
        <div class="ri">${ri}</div>
        <div class="ms"><button>M</button><button>${s.master ? 'D' : 'S'}</button></div>
        <div class="name ${s.color || ''}">${s.name}</div>`;
}

document.querySelectorAll('.lower').forEach(el => {
    el.innerHTML = lower(el.dataset);
});

const waveIcon = `<div class="type">${use('i-wave', '20 14')}</div>`;
const auxIcon = '<div class="type aux"><svg viewBox="0 0 20 17"><circle cx="10" cy="8.500" r="6.500" fill="#f7f04b" stroke="none"/><path d="M10 3v5"/></svg></div>';

// [name, color, read, peak, level, pos, rec]
const strips = [
    ['Lead vox_1', 'teal', 'touch', '-2.3', '-9.0', 64, 'rec'],
    ['bg Lead_1', 'teal', 'on', '-11.3', '-5.0', 52, 'rec'],
    ['bg Lead_2', 'teal', 'on', '', '-4.0', 47, 'rec'],
    ['bg vox', 'teal', 'on', '-9.0', '-5.1', 52, 'rec'],
    ['bg vox_1', 'teal', 'on', '-12.1', '-5.1', 52, 'armed'],
    ['Reverb1', 'green', '', '-29.0', '0.0', 29],
    ['Delay', 'green', '', '-27.1', '0.0', 29],
    ['Reverb2', 'green', '', '-20.9', '0.0', 29],
    ['Drums', 'orange', '', '-7.1', '0.0', 29],
    ['Bass', 'orange', '', '-5.0', '-1.0', 34],
    ['Synths', 'orange', '', '-8.8', '0.0', 29],
    ['LeadVox', 'orange', '', '-5.3', '0.0', 29],
    ['BgVox', 'orange', '', '-10.7', '-1.0', 34],
    ['Effects', 'orange', '', '-17.2', '0.0', 29],
    ['VoxShift', 'green', 'on', '-17.4', '0.0', 29],
    ['VoxDelay2', 'green', 'on', '-24.3', '0.0', 29],
    ['VoxChorus', 'green', 'on', '-25.6', '0.0', 29],
    ['Stereo Out', 'pink', 'on', '-0.3', '0.0', 29],
    ['Master', 'purple', '', '', '0.0', 29]
];

document.getElementById('strips').innerHTML = strips.map(([name, color, read, peak, level, pos, rec]) => {
    const main = name === 'Stereo Out' || name === 'Master';
    const audio = color === 'teal' || main;
    return `<div class="strip${rec === 'armed' ? ' selected' : ''}">
        <div class="stub${main ? ' none' : ''}"></div>
        <div class="slot-group"></div>
        ${lower({
            name, read, peak, level, pos, rec,
            color: color + '-name',
            master: name === 'Master',
            bounce: name === 'Stereo Out',
            warn: name === 'Stereo Out' ? 'warn' : '',
            icon: audio ? waveIcon : auxIcon
        })}
    </div>`;
}).join('');

const mainMarks = [['6', 2], ['3', 16], ['0', 29], ['3', 43], ['6', 57], ['10', 66], ['15', 77], ['20', 86], ['30', 95], ['40', 101], ['∞', 109]];
document.getElementById('main-scale').innerHTML = `<svg width="26" height="112">
    ${mainMarks.map(([n, y]) => `<text x="15" y="${y + 3}">${n}</text>`).join('')}
    ${tickPaths(17, 21, 26)}</svg>`;
```
